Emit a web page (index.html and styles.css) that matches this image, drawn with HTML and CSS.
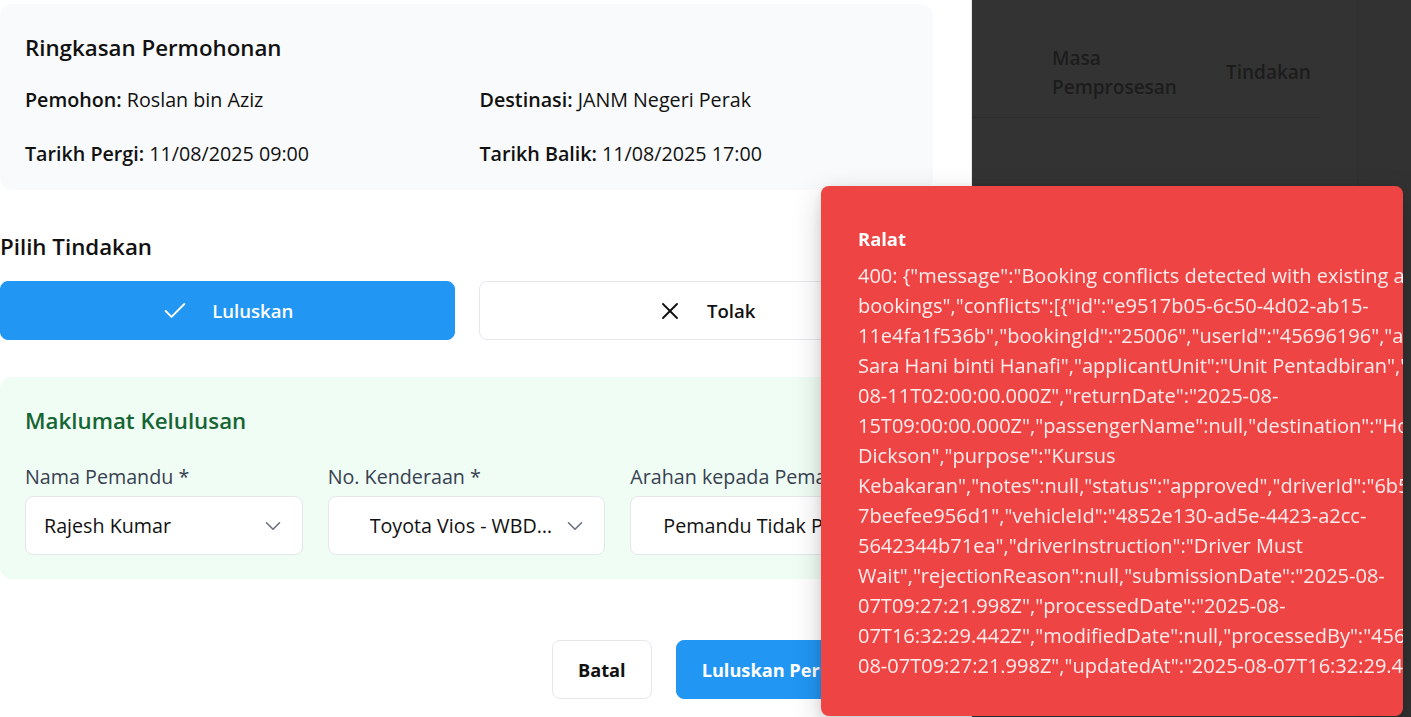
FILE: index.html
```html
<!DOCTYPE html>
<html lang="ms">
<head>
<meta charset="utf-8">
<title>Kelulusan Permohonan</title>
<link rel="stylesheet" href="styles.css">
</head>
<body>
<div class="screen">
  <section class="dialog">
    <div class="card summary">
      <h2 class="card-title">Ringkasan Permohonan</h2>
      <div class="summary-grid">
        <p class="info"><b>Pemohon:</b> Roslan bin Aziz</p>
        <p class="info"><b>Destinasi:</b> JANM Negeri Perak</p>
        <p class="info"><b>Tarikh Pergi:</b> 11/08/2025 09:00</p>
        <p class="info"><b>Tarikh Balik:</b> 11/08/2025 17:00</p>
      </div>
    </div>

    <h3 class="section-title">Pilih Tindakan</h3>
    <div class="actions">
      <button class="action action-approve">
        <svg class="action-icon" viewBox="0 0 24 24" fill="none" stroke="currentColor" stroke-width="1.6" stroke-linecap="round" stroke-linejoin="round"><path d="M20 6 9 17l-5-5"/></svg>
        <span>Luluskan</span>
      </button>
      <button class="action action-reject">
        <svg class="action-icon" viewBox="0 0 24 24" fill="none" stroke="currentColor" stroke-width="1.6" stroke-linecap="round" stroke-linejoin="round"><path d="M18 6 6 18"/><path d="m6 6 12 12"/></svg>
        <span>Tolak</span>
      </button>
    </div>

    <div class="card approval">
      <h2 class="card-title approval-title">Maklumat Kelulusan</h2>
      <div class="fields">
        <div class="field">
          <label class="field-label">Nama Pemandu *</label>
          <div class="select">
            <span class="select-value">Rajesh Kumar</span>
            <svg class="chev" viewBox="0 0 24 24" fill="none" stroke="currentColor" stroke-width="1.5" stroke-linecap="round" stroke-linejoin="round"><path d="m6 9 6 6 6-6"/></svg>
          </div>
        </div>
        <div class="field">
          <label class="field-label">No. Kenderaan *</label>
          <div class="select select-wide">
            <span class="select-value">Toyota Vios - WBD 1234 (Sedan)</span>
            <svg class="chev" viewBox="0 0 24 24" fill="none" stroke="currentColor" stroke-width="1.5" stroke-linecap="round" stroke-linejoin="round"><path d="m6 9 6 6 6-6"/></svg>
          </div>
        </div>
        <div class="field">
          <label class="field-label">Arahan kepada Pemandu</label>
          <div class="select select-mid">
            <span class="select-value">Pemandu Tidak Perlu Tunggu</span>
            <svg class="chev" viewBox="0 0 24 24" fill="none" stroke="currentColor" stroke-width="1.5" stroke-linecap="round" stroke-linejoin="round"><path d="m6 9 6 6 6-6"/></svg>
          </div>
        </div>
      </div>
    </div>

    <div class="footer">
      <button class="btn btn-outline">Batal</button>
      <button class="btn btn-primary">Luluskan Permohonan</button>
    </div>
  </section>

  <aside class="backdrop">
    <div class="bg-table">
      <div class="bg-head">
        <div class="th th-masa">Masa<br>Pemprosesan</div>
        <div class="th th-act">Tindakan</div>
      </div>
    </div>
    <div class="bg-side"></div>
  </aside>
</div>

<div class="toast" role="alert">
  <div class="toast-title">Ralat</div>
  <div class="toast-body">
    <div class="tl">400: {"message":"Booking conflicts detected with existing approved</div>
    <div class="tl">bookings","conflicts":[{"id":"e9517b05-6c50-4d02-ab15-</div>
    <div class="tl">11e4fa1f536b","bookingId":"25006","userId":"45696196","applicantName":"</div>
    <div class="tl">Sara Hani binti Hanafi","applicantUnit":"Unit Pentadbiran","departureDate":"2025-</div>
    <div class="tl">08-11T02:00:00.000Z","returnDate":"2025-08-</div>
    <div class="tl">15T09:00:00.000Z","passengerName":null,"destination":"Hotel</div>
    <div class="tl">Dickson","purpose":"Kursus</div>
    <div class="tl">Kebakaran","notes":null,"status":"approved","driverId":"6b54a1c2-</div>
    <div class="tl">7beefee956d1","vehicleId":"4852e130-ad5e-4423-a2cc-</div>
    <div class="tl">5642344b71ea","driverInstruction":"Driver Must</div>
    <div class="tl">Wait","rejectionReason":null,"submissionDate":"2025-08-</div>
    <div class="tl">07T09:27:21.998Z","processedDate":"2025-08-</div>
    <div class="tl">07T16:32:29.442Z","modifiedDate":null,"processedBy":"45696196","createdAt":"2025-</div>
    <div class="tl">08-07T09:27:21.998Z","updatedAt":"2025-08-07T16:32:29.442Z"}]}</div>
  </div>
</div>
</body>
</html>
```

FILE: styles.css
```css
* { box-sizing: border-box; }

html, body {
  margin: 0;
  padding: 0;
  height: 717px;
  overflow: hidden;
}

body {
  font-family: "Open Sans", "Noto Sans", "Liberation Sans", sans-serif;
  font-size: 19.7px;
  color: #111827;
  background: #ffffff;
}

.screen {
  display: flex;
  height: 717px;
}

/* ---------- dialog ---------- */
.dialog {
  width: 971px;
  flex: none;
  background: #ffffff;
  padding: 4px 38px 0 0;
  display: flex;
  flex-direction: column;
}

.card {
  border-radius: 12px;
  padding: 28px 25px 22px 25px;
}

.summary {
  background: #f9fafb;
  height: 186px;
}

.card-title {
  margin: 0;
  font-size: 22.3px;
  font-weight: 600;
  line-height: 32px;
  color: #111111;
}

.summary-grid {
  margin-top: 22px;
  display: grid;
  grid-template-columns: 1fr 1fr;
  column-gap: 26px;
  row-gap: 27px;
}

.info {
  margin: 0;
  line-height: 27px;
  color: #111111;
}

.info b { font-weight: 600; }

.section-title {
  margin: 42px 0 0 0;
  font-size: 22.3px;
  font-weight: 600;
  line-height: 30px;
  color: #111111;
}

.actions {
  margin-top: 19px;
  display: grid;
  grid-template-columns: 1fr 1fr;
  gap: 24px;
}

.action {
  height: 59px;
  border-radius: 8px;
  font-family: inherit;
  font-size: 18.6px;
  font-weight: 600;
  display: flex;
  align-items: center;
  justify-content: center;
  gap: 23px;
  cursor: pointer;
}

.action-icon {
  width: 28px;
  height: 28px;
}

.action-approve {
  background: #2196f3;
  border: 1px solid #2196f3;
  color: #ffffff;
}

.action-reject {
  background: #ffffff;
  border: 1px solid #e5e7eb;
  color: #111111;
}

.approval {
  margin-top: 37px;
  background: #f0fdf4;
  padding-bottom: 24px;
}

.approval-title { color: #166534; }

.fields {
  margin-top: 26px;
  display: grid;
  grid-template-columns: 1fr 1fr 1fr;
  gap: 25px;
}

.field {
  display: flex;
  flex-direction: column;
  gap: 6px;
  min-width: 0;
}

.field-label {
  line-height: 27px;
  font-weight: 500;
  color: #374151;
  white-space: nowrap;
}

.select {
  height: 59px;
  background: #ffffff;
  border: 1px solid #e5e7eb;
  border-radius: 8px;
  display: flex;
  align-items: center;
  padding: 0 16px 0 18px;
  gap: 8px;
  min-width: 0;
}

.select-wide { padding-left: 41px; }
.select-mid { padding-left: 32px; }

.select-value {
  flex: 1;
  min-width: 0;
  white-space: nowrap;
  overflow: hidden;
  text-overflow: ellipsis;
  color: #111111;
}

.chev {
  width: 26px;
  height: 26px;
  flex: none;
  color: #6b7280;
}

.footer {
  margin-top: 61px;
  display: flex;
  justify-content: flex-end;
  gap: 24px;
}

.btn {
  height: 59px;
  border-radius: 8px;
  font-family: inherit;
  font-size: 18.2px;
  font-weight: 700;
  padding: 0 25px;
  cursor: pointer;
}

.btn-outline {
  background: #ffffff;
  border: 1px solid #e5e7eb;
  color: #111111;
}

.btn-primary {
  background: #2196f3;
  border: 1px solid #2196f3;
  color: #ffffff;
}

/* ---------- dimmed page behind ---------- */
.backdrop {
  flex: 1;
  background: #333333;
  display: flex;
  border-left: 1px solid #e9e9e9;
}

.bg-table {
  width: 349px;
  flex: none;
}

.bg-head {
  height: 118px;
  border-bottom: 1px solid #2d2d2d;
  display: flex;
  align-items: center;
  padding: 28px 0 0 80px;
  color: #1c1c1c;
  font-weight: 600;
  font-size: 19px;
  line-height: 29px;
}

.th-masa { width: 174px; }

.bg-side {
  margin-left: 36px;
  flex: 1;
  border-left: 1px solid #2f2f2f;
  background: #323232;
}

/* ---------- toast ---------- */
.toast {
  position: fixed;
  left: 821px;
  top: 186px;
  width: 582px;
  height: 530px;
  background: #ef4444;
  border-radius: 8px;
  overflow: hidden;
  padding: 38px 0 0 37px;
  color: #ffffff;
  box-shadow: 0 10px 30px rgba(0, 0, 0, 0.18), 0 4px 12px rgba(0, 0, 0, 0.1);
}

.toast-title {
  font-weight: 700;
  font-size: 18.4px;
  line-height: 30px;
}

.toast-body {
  margin-top: 7px;
  font-size: 20px;
  line-height: 30px;
  color: rgba(255, 255, 255, 0.9);
}

.tl { white-space: nowrap; }
```
